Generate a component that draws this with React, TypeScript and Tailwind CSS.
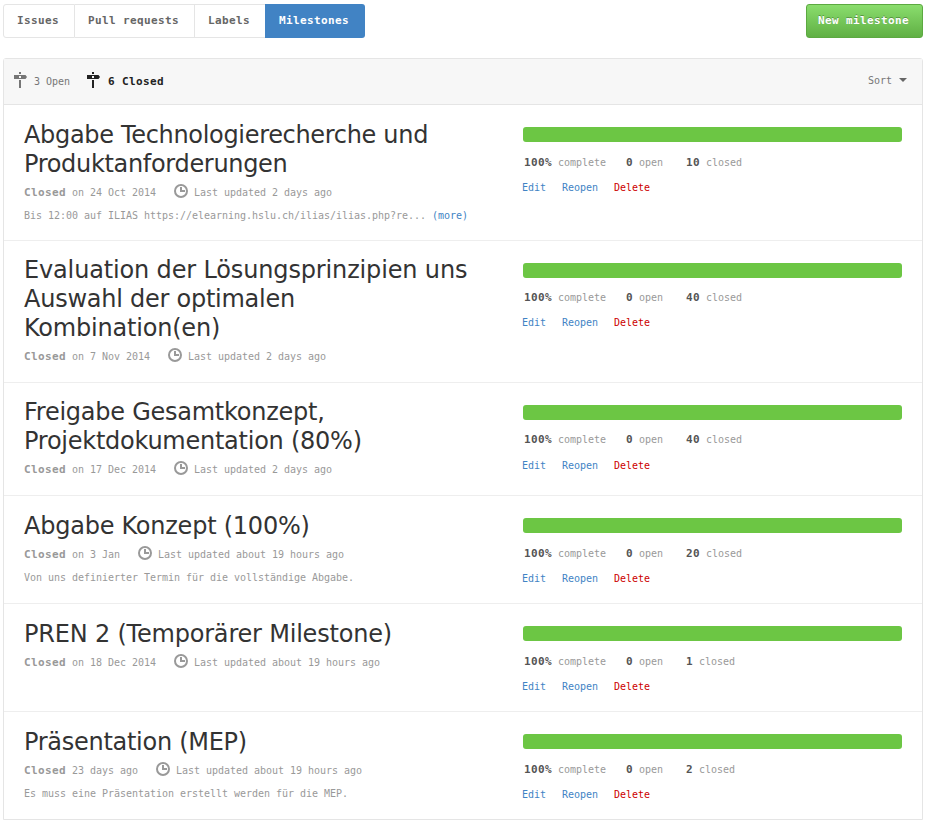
import React from "react";

type Line = { text: string; tracking: string };

type Milestone = {
  title: Line[];
  height: string;
  titlePad: string;
  statPad: string;
  linkPad: string;
  when: string;
  updated: string;
  desc?: string;
  more?: boolean;
  closed: number;
};

const milestones: Milestone[] = [
  { title: [{ text: "Abgabe Technologierecherche und", tracking: "tracking-[-0.32px]" }, { text: "Produktanforderungen", tracking: "tracking-[-0.32px]" }], height: "h-[136px]", titlePad: "pt-4", statPad: "mt-[11px]", linkPad: "mt-1", when: "on 24 Oct 2014", updated: "2 days ago", desc: "Bis 12:00 auf ILIAS https://elearning.hslu.ch/ilias/ilias.php?re...", more: true, closed: 10 },
  { title: [{ text: "Evaluation der Lösungsprinzipien uns", tracking: "tracking-[-0.15px]" }, { text: "Auswahl der optimalen", tracking: "tracking-[-0.25px]" }, { text: "Kombination(en)", tracking: "tracking-[-0.2px]" }], height: "h-[142px]", titlePad: "pt-[15px]", statPad: "mt-[10px]", linkPad: "mt-1", when: "on 7 Nov 2014", updated: "2 days ago", closed: 40 },
  { title: [{ text: "Freigabe Gesamtkonzept,", tracking: "tracking-[-0.25px]" }, { text: "Projektdokumentation (80%)", tracking: "tracking-[-0.25px]" }], height: "h-[113px]", titlePad: "pt-[15px]", statPad: "mt-[10px]", linkPad: "mt-[5px]", when: "on 17 Dec 2014", updated: "2 days ago", closed: 40 },
  { title: [{ text: "Abgabe Konzept (100%)", tracking: "tracking-[-0.24px]" }], height: "h-[108px]", titlePad: "pt-4", statPad: "mt-[11px]", linkPad: "mt-1", when: "on 3 Jan", updated: "about 19 hours ago", desc: "Von uns definierter Termin für die vollständige Abgabe.", closed: 20 },
  { title: [{ text: "PREN 2 (Temporärer Milestone)", tracking: "tracking-[-0.2px]" }], height: "h-[108px]", titlePad: "pt-4", statPad: "mt-[11px]", linkPad: "mt-1", when: "on 18 Dec 2014", updated: "about 19 hours ago", closed: 1 },
  { title: [{ text: "Präsentation (MEP)", tracking: "tracking-[-0.28px]" }], height: "h-[108px]", titlePad: "pt-4", statPad: "mt-[11px]", linkPad: "mt-1", when: "23 days ago", updated: "about 19 hours ago", desc: "Es muss eine Präsentation erstellt werden für die MEP.", closed: 2 },
];

function Bold({ children }: { children: React.ReactNode }) {
  return <b className="text-[11px] font-bold tracking-[0.38px]">{children}</b>;
}

function Clock() {
  return (
    <svg width="14" height="14" viewBox="0 0 14 14" fill="none" stroke="currentColor" strokeWidth="2" className="-mt-1 ml-[18px] mr-[6px] shrink-0">
      <circle cx="7" cy="7" r="6" />
      <path d="M7 3v4h4" />
    </svg>
  );
}

function Signpost() {
  return (
    <svg width="14" height="16" viewBox="0 0 14 16" fill="currentColor" className="-mt-[3px] shrink-0">
      <path fillRule="evenodd" d="M5 0h2v2H5zM0 3h11.5L13 5l-1.5 2H0zM5 4h2v2H5zM5 8h2v8H5z" />
    </svg>
  );
}

function Row({ m, last }: { m: Milestone; last: boolean }) {
  return (
    <div className={`flex ${m.height} ${last ? "" : "border-b border-[#eee]"}`}>
      <div className={`w-[519px] shrink-0 pl-5 ${m.titlePad}`}>
        <h2 className="font-['DejaVu_Sans',sans-serif] text-[24px] leading-[29px] text-[#333]">
          {m.title.map((line) => (
            <span key={line.text} className={`block whitespace-nowrap ${line.tracking}`}>{line.text}</span>
          ))}
        </h2>
        <div className="-mt-px flex h-[29px] items-center whitespace-pre text-[#999]">
          <span className="pt-px"><Bold>Closed</Bold></span>
          <span> {m.when}</span>
          <Clock />
          <span>Last updated {m.updated}</span>
        </div>
        {m.desc && (
          <p className="-mt-px h-5 whitespace-pre leading-5 text-[#999]">
            {m.desc}
            {m.more && <span className="text-[#4183c4]"> (more)</span>}
          </p>
        )}
      </div>
      <div className="w-[379px] pt-[22px]">
        <div className="h-[15px] rounded-[3px] bg-[#6cc644]" />
        <div className={`ml-px flex h-5 items-center whitespace-pre text-[#999] ${m.statPad}`}>
          <span className="w-[102px]"><span className="text-[#555]"><Bold>100%</Bold></span> complete</span>
          <span className="w-[60px]"><span className="text-[#555]"><Bold>0</Bold></span> open</span>
          <span><span className="text-[#555]"><Bold>{m.closed}</Bold></span> closed</span>
        </div>
        <div className={`-ml-px flex h-5 items-center gap-4 text-[#4183c4] ${m.linkPad}`}>
          <span>Edit</span>
          <span>Reopen</span>
          <span className="text-[#c00]">Delete</span>
        </div>
      </div>
    </div>
  );
}

export default function App() {
  return (
    <div className="h-[821px] w-[925px] overflow-hidden bg-white pl-[3px] pr-[2px] pt-1 font-['DejaVu_Sans_Mono',monospace] text-[10px] tracking-[-0.02px]">
      <div className="flex h-[34px] justify-between">
        <nav className="flex text-[#666]">
          <div className="flex w-[72px] items-center rounded-l-[3px] border border-[#e5e5e5] pl-[13px]"><Bold>Issues</Bold></div>
          <div className="flex w-[120px] items-center border-y border-r border-[#e5e5e5] pl-[13px]"><Bold>Pull requests</Bold></div>
          <div className="flex w-[70px] items-center border-y border-[#e5e5e5] pl-[13px]"><Bold>Labels</Bold></div>
          <div className="flex w-[100px] items-center rounded-r-[3px] bg-[#4183c4] pl-[14px] text-white"><Bold>Milestones</Bold></div>
        </nav>
        <button className="flex w-[117px] items-center rounded-[3px] border border-[#5ca941] bg-linear-to-b from-[#8add6d] to-[#60b044] pl-[11px] text-white [text-shadow:0_-1px_0_rgba(0,0,0,0.3)]"><Bold>New milestone</Bold></button>
      </div>
      <main className="mt-5 h-[762px] rounded-t-[3px] border border-[#e5e5e5]">
        <div className="flex h-[46px] items-center border-b border-[#e5e5e5] bg-[#f7f7f7] pl-[10px] pr-[15px] text-[#767676]">
          <Signpost />
          <span className="ml-[6px]">3 Open</span>
          <span className="ml-[17px] flex items-center text-[#222]"><Signpost /><span className="ml-[7px] pt-px"><Bold>6 Closed</Bold></span></span>
          <span className="-mt-[2px] ml-auto">Sort</span>
          <span className="-mt-1 ml-[7px] border-x-[4px] border-t-[4px] border-x-transparent border-t-[#666]" />
        </div>
        {milestones.map((m, i) => (
          <Row key={m.title[0].text} m={m} last={i === milestones.length - 1} />
        ))}
      </main>
    </div>
  );
}
